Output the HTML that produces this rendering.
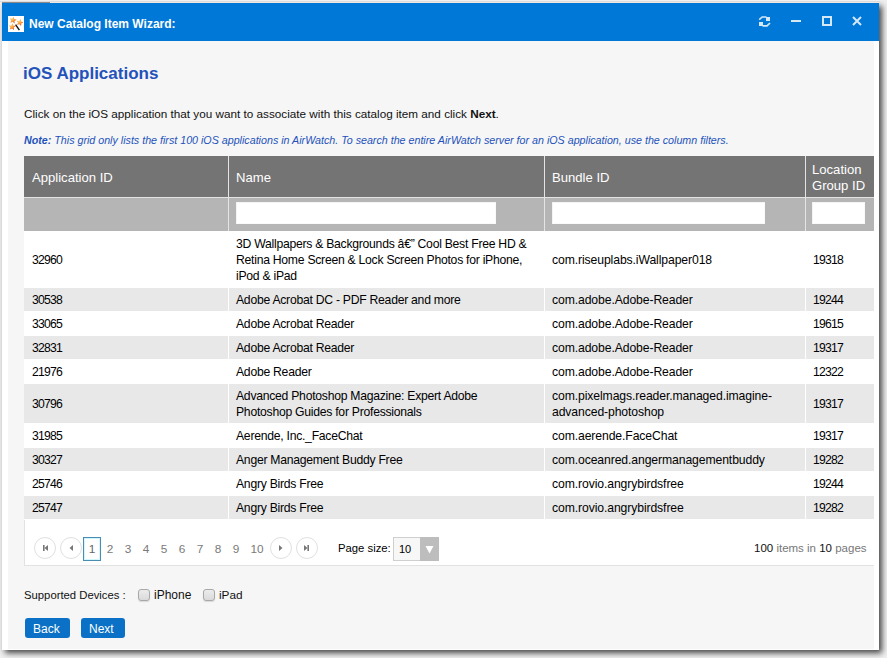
<!DOCTYPE html>
<html><head><meta charset="utf-8">
<style>
*{box-sizing:border-box;margin:0;padding:0}
html,body{width:887px;height:658px;overflow:hidden;background:#f0f0f0;font-family:"Liberation Sans",sans-serif;color:#000}
.abs{position:absolute}
#win{position:absolute;left:2px;top:3px;width:877px;height:647px;background:#fff;box-shadow:3px 3px 6px rgba(0,0,0,.72)}
#title{position:absolute;left:0;top:0;width:877px;height:38px;background:#0078d7}
#content{position:absolute;left:6px;top:38px;width:866px;height:608px;background:#f6f6f6}
.t{position:absolute;white-space:nowrap;line-height:16px}
#grid{position:absolute;left:24px;top:156px;width:850px;height:364px;background:#fff}
#hbg{position:absolute;left:0;top:0;width:850px;height:75px;background:#e4e4e4}
.hdr{position:absolute;top:0;height:41px;background:#747474;color:#fff;font-size:13.1px}
.flt{position:absolute;top:42px;height:33px;background:#b5b5b5}
.inp{position:absolute;top:46px;height:22px;background:#fff;border:1px solid #f4f4f4;border-right-color:#fafafa;border-bottom-color:#fafafa}
.row{position:absolute;left:0;width:850px}
.g{background:#e8e8e8}
.cell{position:absolute;font-size:12.2px;letter-spacing:-0.26px;line-height:16px;white-space:nowrap;color:#000}
.num{letter-spacing:-0.75px}
.bnd{letter-spacing:-0.1px}
.circ{width:22px;height:22px;border:1px solid #e0e0e0;border-radius:50%}
.circ svg{position:absolute;left:-1px;top:-1px}
.pg{position:absolute;top:541px;width:18px;text-align:center;font-size:11.8px;line-height:16px;color:#7a7a7a}
.chk{width:12px;height:12px;border:1px solid #a8a8a8;border-radius:3px;background:linear-gradient(#ececec,#dadada);box-shadow:0 1px 1px rgba(0,0,0,.12)}
.btn{position:absolute;top:618px;height:20px;background:#0a71c6;border-radius:3px;color:#fff;font-size:12px;line-height:22px;padding-left:8px}
</style></head><body>
<div id="win">
  <div id="title">
    <svg class="abs" style="left:6px;top:13px" width="16" height="16" viewBox="0 0 16 16">
      <defs><radialGradient id="sg" cx="35%" cy="30%" r="75%"><stop offset="0" stop-color="#ffd27a"/><stop offset=".55" stop-color="#f7922e"/><stop offset="1" stop-color="#c8401a"/></radialGradient></defs>
      <rect width="16" height="16" fill="#fff"/>
      <polygon points="5.63,0.65 6.22,3.02 8.56,3.70 6.50,5.00 6.58,7.44 4.70,5.87 2.41,6.70 3.32,4.44 1.82,2.51 4.25,2.67" fill="url(#sg)"/>
      <polygon points="12.73,3.12 13.12,5.53 15.40,6.41 13.23,7.53 13.09,9.96 11.36,8.24 9.00,8.87 10.10,6.69 8.78,4.64 11.19,5.01" fill="url(#sg)"/>
      <polygon points="4.51,7.31 5.32,9.62 7.71,10.09 5.76,11.56 6.05,13.99 4.05,12.59 1.84,13.62 2.54,11.28 0.89,9.49 3.32,9.44" fill="url(#sg)"/>
      <line x1="7.6" y1="8.6" x2="11.4" y2="14.2" stroke="#111" stroke-width="1.4"/>
    </svg>
    <div class="t" style="left:27px;top:13px;font-size:12px;font-weight:bold;color:#fff">New Catalog Item Wizard:</div>
    <!-- refresh -->
    <svg class="abs" style="left:756px;top:12px" width="14" height="13" viewBox="0 0 14 13">
      <path d="M1.2 4.6 L4.2 2 L8.5 2" fill="none" stroke="#d4e8f8" stroke-width="1.6"/>
      <rect x="8" y="2" width="4" height="4" fill="#d4e8f8"/>
      <rect x="1" y="7" width="4" height="4" fill="#d4e8f8"/>
      <path d="M4.5 10.9 L9 10.9 L12 8" fill="none" stroke="#d4e8f8" stroke-width="1.6"/>
    </svg>
    <div class="abs" style="left:789px;top:17px;width:10px;height:2px;background:#d4e8f8"></div>
    <div class="abs" style="left:820px;top:13px;width:10px;height:10px;border:2px solid #d4e8f8"></div>
    <svg class="abs" style="left:850px;top:13px" width="10" height="10" viewBox="0 0 10 10">
      <path d="M1 1 L9 9 M9 1 L1 9" stroke="#d4e8f8" stroke-width="2"/>
    </svg>
  </div>
  <div id="content"></div>
</div>
<div class="abs" style="left:0;top:0;width:880px;height:1px;background:#f0f0f0"></div>
<div class="abs" style="left:0;top:1px;width:880px;height:1px;background:#dcdcdc"></div>
<div class="abs" style="left:2px;top:2px;width:48px;height:1px;background:#8a8a8a"></div>
<div class="abs" style="left:50px;top:2px;width:829px;height:1px;background:#f0e8e2"></div>

<div class="t" style="left:23px;top:64px;font-size:17px;line-height:20px;font-weight:bold;color:#2352bb">iOS Applications</div>
<div class="t" style="left:24px;top:106px;font-size:11.72px;color:#111">Click on the iOS application that you want to associate with this catalog item and click <b>Next</b>.</div>
<div class="t" style="left:24px;top:132px;font-size:10.7px;font-style:italic;color:#2352bb"><b>Note:</b> This grid only lists the first 100 iOS applications in AirWatch. To search the entire AirWatch server for an iOS application, use the column filters.</div>

<div id="grid">
  <div id="hbg"></div>
  <div class="hdr" style="left:0;width:204px"><div class="t" style="left:8px;top:14px">Application ID</div></div>
  <div class="hdr" style="left:205px;width:315px"><div class="t" style="left:7px;top:14px">Name</div></div>
  <div class="hdr" style="left:521px;width:260px"><div class="t" style="left:7px;top:14px">Bundle ID</div></div>
  <div class="hdr" style="left:782px;width:68px"><div class="t" style="left:6px;top:6px">Location</div><div class="t" style="left:6px;top:22px">Group ID</div></div>
  <div class="flt" style="left:0;width:204px"></div>
  <div class="flt" style="left:205px;width:315px"></div>
  <div class="flt" style="left:521px;width:260px"></div>
  <div class="flt" style="left:782px;width:68px"></div>
  <div class="inp" style="left:212px;width:260px"></div>
  <div class="inp" style="left:528px;width:213px"></div>
  <div class="inp" style="left:788px;width:53px"></div>
  <div class="row" style="top:75px;height:56px">
    <div class="cell num" style="left:8px;top:21px">32960</div>
    <div class="cell" style="left:212px;top:5px">3D Wallpapers &amp; Backgrounds â€” Cool Best Free HD &amp;<br>Retina Home Screen &amp; Lock Screen Photos for iPhone,<br>iPod &amp; iPad</div>
    <div class="cell bnd" style="left:528px;top:21px">com.riseuplabs.iWallpaper018</div>
    <div class="cell num" style="left:789px;top:21px">19318</div>
  </div>
  <div class="row g" style="top:132px;height:23px">
    <div class="cell num" style="left:8px;top:4px">30538</div>
    <div class="cell" style="left:212px;top:4px">Adobe Acrobat DC - PDF Reader and more</div>
    <div class="cell bnd" style="left:528px;top:4px">com.adobe.Adobe-Reader</div>
    <div class="cell num" style="left:789px;top:4px">19244</div>
  </div>
  <div class="row" style="top:156px;height:23px">
    <div class="cell num" style="left:8px;top:4px">33065</div>
    <div class="cell" style="left:212px;top:4px">Adobe Acrobat Reader</div>
    <div class="cell bnd" style="left:528px;top:4px">com.adobe.Adobe-Reader</div>
    <div class="cell num" style="left:789px;top:4px">19615</div>
  </div>
  <div class="row g" style="top:180px;height:23px">
    <div class="cell num" style="left:8px;top:4px">32831</div>
    <div class="cell" style="left:212px;top:4px">Adobe Acrobat Reader</div>
    <div class="cell bnd" style="left:528px;top:4px">com.adobe.Adobe-Reader</div>
    <div class="cell num" style="left:789px;top:4px">19317</div>
  </div>
  <div class="row" style="top:204px;height:23px">
    <div class="cell num" style="left:8px;top:4px">21976</div>
    <div class="cell" style="left:212px;top:4px">Adobe Reader</div>
    <div class="cell bnd" style="left:528px;top:4px">com.adobe.Adobe-Reader</div>
    <div class="cell num" style="left:789px;top:4px">12322</div>
  </div>
  <div class="row g" style="top:228px;height:39px">
    <div class="cell num" style="left:8px;top:12px">30796</div>
    <div class="cell" style="left:212px;top:4px">Advanced Photoshop Magazine: Expert Adobe<br>Photoshop Guides for Professionals</div>
    <div class="cell bnd" style="left:528px;top:4px">com.pixelmags.reader.managed.imagine-<br>advanced-photoshop</div>
    <div class="cell num" style="left:789px;top:12px">19317</div>
  </div>
  <div class="row" style="top:268px;height:23px">
    <div class="cell num" style="left:8px;top:4px">31985</div>
    <div class="cell" style="left:212px;top:4px">Aerende, Inc._FaceChat</div>
    <div class="cell bnd" style="left:528px;top:4px">com.aerende.FaceChat</div>
    <div class="cell num" style="left:789px;top:4px">19317</div>
  </div>
  <div class="row g" style="top:292px;height:23px">
    <div class="cell num" style="left:8px;top:4px">30327</div>
    <div class="cell" style="left:212px;top:4px">Anger Management Buddy Free</div>
    <div class="cell bnd" style="left:528px;top:4px">com.oceanred.angermanagementbuddy</div>
    <div class="cell num" style="left:789px;top:4px">19282</div>
  </div>
  <div class="row" style="top:316px;height:23px">
    <div class="cell num" style="left:8px;top:4px">25746</div>
    <div class="cell" style="left:212px;top:4px">Angry Birds Free</div>
    <div class="cell bnd" style="left:528px;top:4px">com.rovio.angrybirdsfree</div>
    <div class="cell num" style="left:789px;top:4px">19244</div>
  </div>
  <div class="row g" style="top:340px;height:23px">
    <div class="cell num" style="left:8px;top:4px">25747</div>
    <div class="cell" style="left:212px;top:4px">Angry Birds Free</div>
    <div class="cell bnd" style="left:528px;top:4px">com.rovio.angrybirdsfree</div>
    <div class="cell num" style="left:789px;top:4px">19282</div>
  </div>
  <div class="abs" style="left:204px;top:75px;width:1px;height:334px;background:#fff"></div>
  <div class="abs" style="left:520px;top:75px;width:1px;height:334px;background:#fff"></div>
  <div class="abs" style="left:781px;top:75px;width:1px;height:334px;background:#fff"></div>
</div>

<div class="abs" style="left:24px;top:520px;width:850px;height:46px;background:#fff;border-left:1px solid #e2e2e2;border-bottom:1px solid #e2e2e2"></div>
<div class="abs circ" style="left:34px;top:537px"><svg width="22" height="22" viewBox="0 0 22 22"><rect x="9" y="8" width="1.6" height="6" fill="#777"/><path d="M10.5 11 L14 8 L14 14 Z" fill="#777"/></svg></div>
<div class="abs circ" style="left:60px;top:537px"><svg width="22" height="22" viewBox="0 0 22 22"><path d="M9.5 11 L13 8 L13 14 Z" fill="#777"/></svg></div>
<div class="abs" style="left:83px;top:537px;width:18px;height:24px;border:1px solid #4a8db2;box-shadow:inset 0 0 0 1px #d2f6ff"></div>
<div class="pg" style="left:83px;width:18px;color:#666">1</div>
<div class="pg" style="left:101px">2</div>
<div class="pg" style="left:119px">3</div>
<div class="pg" style="left:137px">4</div>
<div class="pg" style="left:155px">5</div>
<div class="pg" style="left:173px">6</div>
<div class="pg" style="left:191px">7</div>
<div class="pg" style="left:209px">8</div>
<div class="pg" style="left:227px">9</div>
<div class="pg" style="left:245px;width:24px">10</div>
<div class="abs circ" style="left:270px;top:537px"><svg width="22" height="22" viewBox="0 0 22 22"><path d="M12.5 11 L9 8 L9 14 Z" fill="#777"/></svg></div>
<div class="abs circ" style="left:296px;top:537px"><svg width="22" height="22" viewBox="0 0 22 22"><path d="M11.5 11 L8 8 L8 14 Z" fill="#777"/><rect x="11.4" y="8" width="1.6" height="6" fill="#777"/></svg></div>
<div class="t" style="left:338px;top:540px;font-size:11.3px;color:#000">Page size:</div>
<div class="abs" style="left:393px;top:537px;width:46px;height:24px;background:#f7f7f7;border:1px solid #cfcfcf"></div>
<div class="abs" style="left:420px;top:537px;width:19px;height:24px;background:#bdbdbd"></div>
<svg class="abs" style="left:425px;top:545px" width="9" height="9" viewBox="0 0 9 9"><path d="M0.5 1 L8.5 1 L4.5 8.5 Z" fill="#fff"/></svg>
<div class="t" style="left:399px;top:541px;font-size:11px;color:#000">10</div>
<div class="t" style="left:754px;top:540px;font-size:11.5px;color:#777"><span style="color:#111">100</span> items in <span style="color:#111">10</span> pages</div>

<div class="t" style="left:24px;top:587px;font-size:11.3px;color:#111">Supported Devices :</div>
<div class="abs chk" style="left:138px;top:589px"></div>
<div class="t" style="left:154px;top:587px;font-size:12px;color:#111">iPhone</div>
<div class="abs chk" style="left:203px;top:589px"></div>
<div class="t" style="left:219px;top:587px;font-size:11.8px;color:#111">iPad</div>
<div class="btn" style="left:25px;width:45px">Back</div>
<div class="btn" style="left:81px;width:44px">Next</div>
</body></html>
